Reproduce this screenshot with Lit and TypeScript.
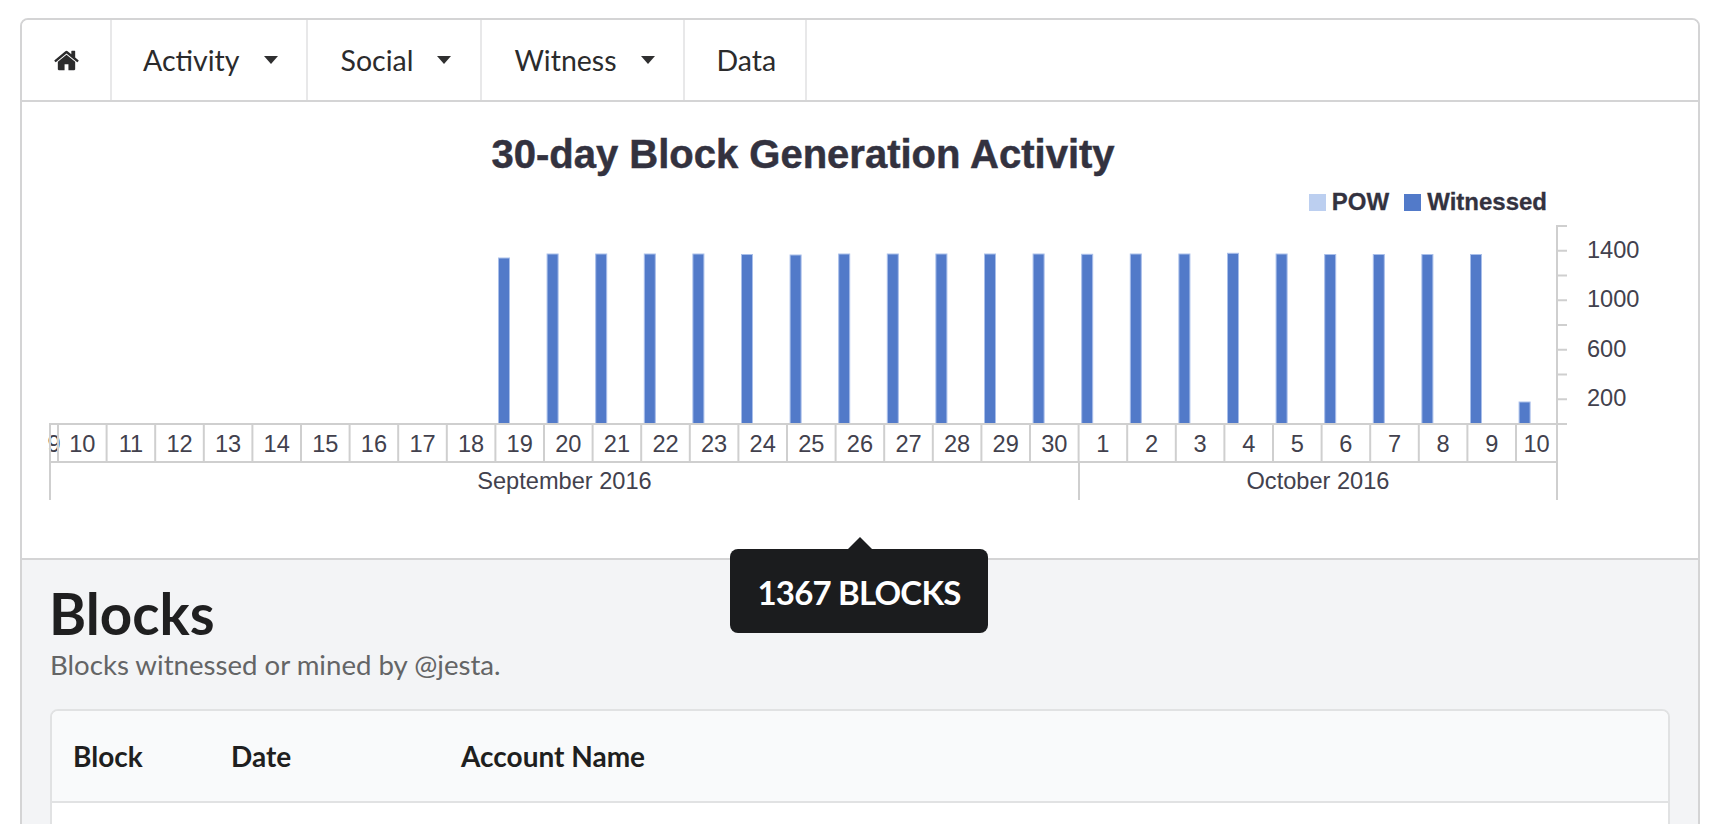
import { LitElement, html, svg, css } from "lit";
import { customElement } from "lit/decorators.js";

// plot svg is drawn in page coordinates, see viewBox below
const DAY_W = 48.6;
const BAR_X = 498;
const AXIS_Y = 424;
const AXIS_LEFT = 50;
const AXIS_RIGHT = 1557;
const FIRST_SEP = 58;
const barTops = [258, 254, 254, 254, 254, 254.5, 255, 254, 254, 254, 254, 254, 254.3, 254, 254, 253.3, 254, 254.5, 254.5, 254.5, 254.5, 402];
const dayLabels = ["10", "11", "12", "13", "14", "15", "16", "17", "18", "19", "20", "21", "22", "23", "24", "25", "26", "27", "28", "29", "30", "1", "2", "3", "4", "5", "6", "7", "8", "9", "10"];

@customElement("app-root")
export class AppRoot extends LitElement {
  static styles = css`
    :host {
      display: block;
      height: 100vh;
      overflow: hidden;
      box-sizing: border-box;
      padding: 18px 20px 0;
      background: #fff;
      font-family: Lato, "Liberation Sans", sans-serif;
      color: #1f1f20;
    }

    .box {
      border: 2px solid #d4d4d5;
      border-radius: 8px;
      height: 900px;
      overflow: hidden;
      display: flex;
      flex-direction: column;
    }

    .nav {
      display: flex;
      height: 80px;
      flex: none;
      border-bottom: 2px solid #d4d4d5;
      background: #fff;
    }

    .nav-item {
      display: flex;
      align-items: center;
      padding: 0 28px 0 32px;
      border-right: 2px solid #e8e8e9;
      font-size: 28.5px;
      color: #2b2b2c;
    }

    .nav-item.home {
      padding: 0 30px 0 31px;
    }

    .nav-item.activity {
      padding-left: 31px;
    }

    .nav-item.social {
      padding: 0 29px 0 33px;
    }

    .nav-item.data {
      padding-right: 29px;
    }

    .nav-item svg {
      width: 27px;
      height: 27px;
      fill: #2b2b2c;
      display: block;
    }

    .caret {
      margin-left: 24px;
      width: 0;
      height: 0;
      border-left: 7px solid transparent;
      border-right: 7px solid transparent;
      border-top: 8px solid #2f2f30;
    }

    .chart {
      position: relative;
      height: 456px;
      flex: none;
      background: #fff;
      font-family: "Liberation Sans", Arial, sans-serif;
      color: #33323f;
    }

    .chart h2 {
      margin: 0;
      padding-top: 32px;
      font-size: 40px;
      line-height: 40px;
      font-weight: 700;
      text-align: center;
      transform: translateX(-57px);
      -webkit-text-stroke: 0.5px #33323f;
    }

    .legend {
      display: flex;
      justify-content: flex-end;
      align-items: center;
      gap: 6px;
      box-sizing: border-box;
      padding: 16px 151px 0 0;
      height: 40px;
      font-size: 24px;
      line-height: 24px;
      font-weight: 700;
      -webkit-text-stroke: 0.3px #33323f;
    }

    .swatch {
      width: 17px;
      height: 17px;
    }

    .swatch.pow {
      background: #bccff0;
    }

    .swatch.wit {
      margin-left: 9px;
      background: #527ac9;
    }

    .plot {
      display: block;
    }

    .plot text {
      font-family: "Liberation Sans", Arial, sans-serif;
      font-size: 23.6px;
      fill: #42414d;
    }

    .plot .mid {
      text-anchor: middle;
    }

    .plot line {
      stroke: #cfcfcf;
      stroke-width: 2;
    }

    .plot rect {
      fill: #527ac9;
      stroke: #a9bfea;
      stroke-width: 1;
    }

    .tooltip {
      position: absolute;
      left: 708px;
      top: 447px;
      width: 258px;
      height: 84px;
      box-sizing: border-box;
      padding-top: 2px;
      border-radius: 8px;
      background: #1b1c1e;
      color: #fff;
      font-family: Lato, sans-serif;
      font-size: 33px;
      letter-spacing: -0.8px;
      font-weight: 700;
      display: flex;
      align-items: center;
      justify-content: center;
    }

    .tooltip::before {
      content: "";
      position: absolute;
      left: 118px;
      top: -12px;
      width: 0;
      height: 0;
      border-left: 12px solid transparent;
      border-right: 12px solid transparent;
      border-bottom: 12px solid #1b1c1e;
    }

    .blocks {
      flex: 1;
      border-top: 2px solid #d4d4d5;
      background: #f3f4f6;
      padding: 26px 28px 0;
    }

    .blocks h1 {
      margin: 0 0 0 -1px;
      font-size: 56.5px;
      line-height: 54px;
      font-weight: 700;
      color: #1f1f20;
    }

    .blocks p {
      margin: 9px 0 0;
      font-size: 27.6px;
      line-height: 32px;
      color: #646566;
    }

    .card {
      margin-top: 28px;
      border: 2px solid #e1e2e3;
      border-radius: 8px;
      background: #fff;
      height: 300px;
      overflow: hidden;
    }

    .card-head {
      display: grid;
      grid-template-columns: 158px 230px 1fr;
      align-items: center;
      height: 90px;
      padding-left: 21px;
      background: #f9fafb;
      border-bottom: 2px solid #e1e2e3;
      font-size: 28px;
      font-weight: 700;
      color: #1f1f20;
    }
  `;

  private renderPlot() {
    const seps = dayLabels.map((_, i) => FIRST_SEP + i * DAY_W);
    const ticks = [0, 1, 2, 3, 4, 5, 6, 7, 8].map((t) => AXIS_Y - t * 24.75);
    const yLabels: [string, number][] = [["1400", 258], ["1000", 306.5], ["600", 357], ["200", 406]];
    return html`
      <svg class="plot" width="1676" height="300" viewBox="22 214 1676 300">
        ${barTops.map((top, i) => svg`<rect x=${BAR_X + i * DAY_W + 0.5} y=${top} width="11" height=${AXIS_Y - top}></rect>`)}
        <text class="mid" x="54" y="452">9</text>
        ${dayLabels.map((d, i) => {
          const next = i < dayLabels.length - 1 ? seps[i + 1] : AXIS_RIGHT;
          return svg`<text class="mid" x=${(seps[i] + next) / 2} y="452">${d}</text>`;
        })}
        <line x1=${AXIS_LEFT} x2=${AXIS_RIGHT + 10} y1=${AXIS_Y} y2=${AXIS_Y}></line>
        <line x1=${AXIS_LEFT} x2=${AXIS_RIGHT} y1="462" y2="462"></line>
        <line x1=${AXIS_LEFT} x2=${AXIS_LEFT} y1="423" y2="500"></line>
        <line x1=${AXIS_RIGHT} x2=${AXIS_RIGHT} y1="225" y2="500"></line>
        <line x1="1079" x2="1079" y1="462" y2="500"></line>
        ${seps.map((x) => svg`<line x1=${x} x2=${x} y1=${AXIS_Y} y2="462"></line>`)}
        ${ticks.map((y) => svg`<line x1=${AXIS_RIGHT} x2=${AXIS_RIGHT + 10} y1=${y} y2=${y}></line>`)}
        ${yLabels.map(([label, y]) => svg`<text x="1587" y=${y}>${label}</text>`)}
        <text class="mid" x="564.500" y="489">September 2016</text>
        <text class="mid" x="1318" y="489">October 2016</text>
      </svg>
    `;
  }

  render() {
    return html`
      <div class="box">
        <nav class="nav">
          <div class="nav-item home">
            <svg viewBox="0 0 1792 1792"><path d="M1472 992v480q0 26-19 45t-45 19h-384v-384h-256v384h-384q-26 0-45-19t-19-45v-480q0-1 .5-3t.5-3l575-474 575 474q1 2 1 6zm223-69l-62 74q-8 9-21 11h-3q-13 0-21-7l-692-577-692 577q-12 8-24 7-13-2-21-11l-62-74q-8-10-7-23.500t11-21.500l719-599q32-26 76-26t76 26l244 204v-195q0-14 9-23t23-9h192q14 0 23 9t9 23v408l219 182q10 8 11 21.500t-7 23.500z"></path></svg>
          </div>
          <div class="nav-item activity">Activity<span class="caret"></span></div>
          <div class="nav-item social">Social<span class="caret"></span></div>
          <div class="nav-item">Witness<span class="caret"></span></div>
          <div class="nav-item data">Data</div>
        </nav>
        <section class="chart">
          <h2>30-day Block Generation Activity</h2>
          <div class="legend">
            <span class="swatch pow"></span><span>POW</span>
            <span class="swatch wit"></span><span>Witnessed</span>
          </div>
          ${this.renderPlot()}
          <div class="tooltip">1367 BLOCKS</div>
        </section>
        <section class="blocks">
          <h1>Blocks</h1>
          <p>Blocks witnessed or mined by @jesta.</p>
          <div class="card">
            <div class="card-head">
              <span>Block</span><span>Date</span><span>Account Name</span>
            </div>
          </div>
        </section>
      </div>
    `;
  }
}
